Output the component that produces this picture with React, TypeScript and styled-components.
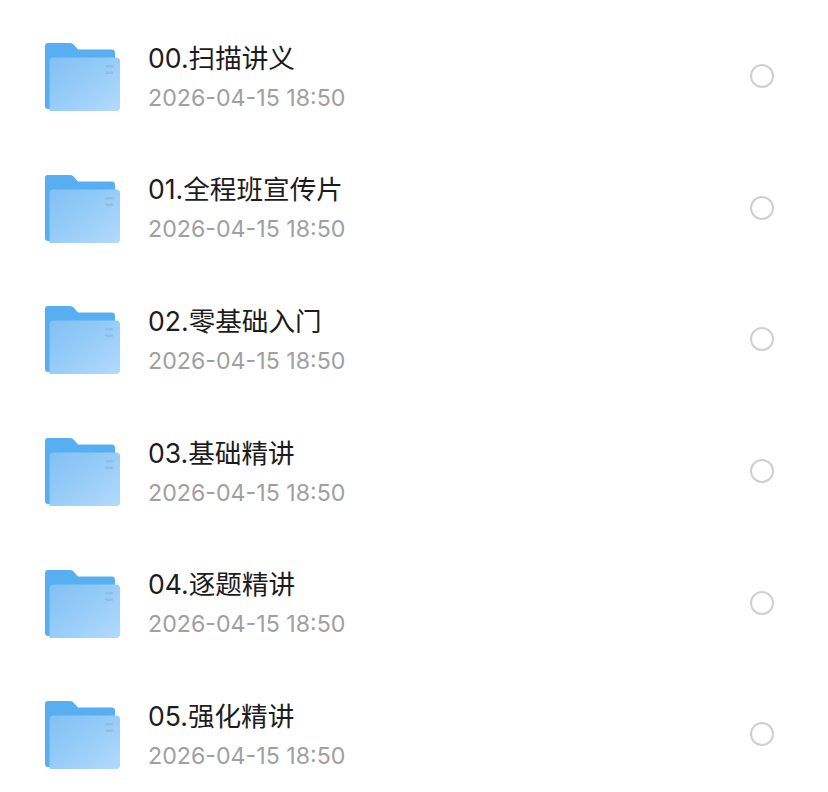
import React from 'react';
import styled, { createGlobalStyle } from 'styled-components';

const GlobalStyle = createGlobalStyle`
  html, body {
    margin: 0;
    padding: 0;
    background: #ffffff;
    overflow: hidden;
  }
`;

const files = [
  '00.扫描讲义',
  '01.全程班宣传片',
  '02.零基础入门',
  '03.基础精讲',
  '04.逐题精讲',
  '05.强化精讲',
];

const FolderIcon = ({ id }: { id: number }) => (
  <FolderSvg viewBox="0 0 75 68" width="75" height="68">
    <defs>
      <linearGradient id={`front-${id}`} x1="0" y1="0" x2="1" y2="1">
        <stop offset="0" stopColor="#82c0f3" />
        <stop offset="0.5" stopColor="#97cdf8" />
        <stop offset="1" stopColor="#b4dafe" />
      </linearGradient>
    </defs>
    <path
      d="M3 0H25C27 0 28 .8 29 2L33 6.500H67C69 6.500 70 8 70 10V66H3C1 66 0 65 0 63V3C0 1 1 0 3 0Z"
      fill="#57aef0"
    />
    <path
      d="M8 14.500H71.500C73.500 14.500 75 16 75 18V65C75 67 73.500 68 71.500 68H5C4 68 4.500 67 4.500 65V18C4.500 16 6 14.500 8 14.500Z"
      fill={`url(#front-${id})`}
    />
    <rect x="60" y="22" width="8" height="2.500" rx="1" fill="#8dbfe9" />
    <rect x="60" y="28.500" width="8" height="2.500" rx="1" fill="#8dbfe9" />
  </FolderSvg>
);

const App = () => (
  <>
    <GlobalStyle />
    <List>
      {files.map((name, i) => (
        <Row key={name}>
          <FolderIcon id={i} />
          <Info>
            <Title>{name}</Title>
            <DateText>2026-04-15 18:50</DateText>
          </Info>
          <Radio />
        </Row>
      ))}
    </List>
  </>
);

export default App;

const List = styled.div`
  width: 828px;
  height: 792px;
  padding-top: 10.5px;
  box-sizing: border-box;
  display: flex;
  flex-direction: column;
  font-family: Inter, "Noto Sans CJK SC", sans-serif;
`;
const Row = styled.div`
  flex: 0 0 131.6px;
  height: 131.6px;
  box-sizing: border-box;
  padding: 0 54px 0 45px;
  display: flex;
  align-items: center;
`;
const FolderSvg = styled.svg`
  flex: none;
  display: block;
  margin-top: 2px;
`;
const Info = styled.div`
  flex: 1;
  margin-left: 28px;
  padding-top: 1px;
  display: flex;
  flex-direction: column;
  gap: 10px;
`;
const Title = styled.div`
  font-size: 26.6px;
  line-height: 32px;
  color: #1c1c1c;
`;
const DateText = styled.div`
  font-size: 23.2px;
  line-height: 28px;
  color: #a0a0a0;
`;
const Radio = styled.div`
  width: 24px;
  height: 24px;
  box-sizing: border-box;
  border: 2px solid #cfcfcf;
  border-radius: 50%;
  flex: none;
`;
